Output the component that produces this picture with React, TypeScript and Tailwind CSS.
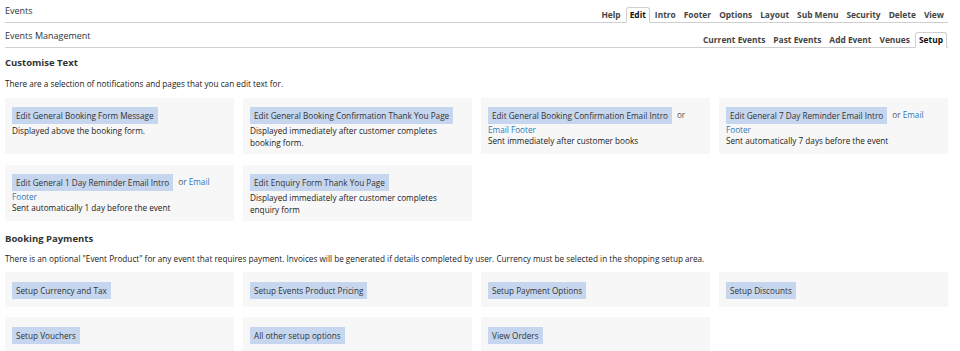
import React from "react";

const topTabs = ["Help", "Edit", "Intro", "Footer", "Options", "Layout", "Sub Menu", "Security", "Delete", "View"];
const subTabs = ["Current Events", "Past Events", "Add Event", "Venues", "Setup"];

type TextCard = {
  label: string;
  desc: string;
  footer?: boolean;
};

const textCards: TextCard[] = [
  { label: "Edit General Booking Form Message", desc: "Displayed above the booking form." },
  { label: "Edit General Booking Confirmation Thank You Page", desc: "Displayed immediately after customer completes booking form." },
  { label: "Edit General Booking Confirmation Email Intro", desc: "Sent immediately after customer books", footer: true },
  { label: "Edit General 7 Day Reminder Email Intro", desc: "Sent automatically 7 days before the event", footer: true },
  { label: "Edit General 1 Day Reminder Email Intro", desc: "Sent automatically 1 day before the event", footer: true },
  { label: "Edit Enquiry Form Thank You Page", desc: "Displayed immediately after customer completes enquiry form" },
];

const paymentCards = [
  "Setup Currency and Tax",
  "Setup Events Product Pricing",
  "Setup Payment Options",
  "Setup Discounts",
  "Setup Vouchers",
  "All other setup options",
  "View Orders",
];

function TabBar({ title, tabs, active }: { title: string; tabs: string[]; active: string }) {
  return (
    <div className="flex justify-between items-end h-[23px] border-b border-[#cfcfcf]">
      <div className="self-start pt-[4px] text-[9px] leading-[14px] text-[#333]">{title}</div>
      <div className="flex items-end -mb-px">
        {tabs.map((t) =>
          t === active ? (
            <div
              key={t}
              className="h-[16px] px-[3px] mx-[1px] flex items-center bg-white border border-b-white border-[#cfcfcf] rounded-t-[3px] font-bold text-[8.4px] text-[#111]"
            >
              {t}
            </div>
          ) : (
            <div key={t} className="h-[16px] px-[4px] flex items-center font-bold text-[8.4px] text-[#444]">
              {t}
            </div>
          )
        )}
      </div>
    </div>
  );
}

function Btn({ children }: { children: React.ReactNode }) {
  return (
    <span className="inline-block bg-[#c6d6ee] text-[#333] px-[4px] py-[2px] leading-[13px] align-middle">{children}</span>
  );
}

export default function App() {
  return (
    <div
      className="w-[960px] h-[351px] overflow-hidden bg-white pl-[5px] pr-[12px] text-[8.2px] text-[#222]"
      style={{ fontFamily: '"Open Sans", "Noto Sans", sans-serif' }}
    >
      <TabBar title="Events" tabs={topTabs} active="Edit" />
      <div className="h-[2px]" />
      <TabBar title="Events Management" tabs={subTabs} active="Setup" />

      <h2 className="mt-[9px] font-bold text-[9.5px] leading-[12px] text-[#333]">Customise Text</h2>
      <p className="mt-[9px] leading-[12px]">There are a selection of notifications and pages that you can edit text for.</p>

      <div className="mt-[8px] grid grid-cols-4 gap-x-[9px] gap-y-[11px]">
        {textCards.map((c) => (
          <div key={c.label} className="bg-[#f7f7f7] px-[7px] pt-[9px] pb-[8px] h-[56px] leading-[12px]">
            <div className="leading-[11px]">
              <Btn>{c.label}</Btn>
              {c.footer && (
                <>
                  <span className="ml-[5px] text-[#555]">or</span> <span className="text-[#2f7ab8]">Email</span>{" "}
                  <span className="text-[#2f7ab8]">Footer</span>
                </>
              )}
            </div>
            <div className={c.footer ? "leading-[11px]" : "leading-[12px] mt-[1px]"}>{c.desc}</div>
          </div>
        ))}
      </div>

      <h2 className="mt-[12px] font-bold text-[9.5px] leading-[12px] text-[#333]">Booking Payments</h2>
      <p className="mt-[8px] leading-[12px]">
        There is an optional "Event Product" for any event that requires payment. Invoices will be generated if details completed by user. Currency must be selected in the shopping setup area.
      </p>

      <div className="mt-[7px] grid grid-cols-4 gap-x-[9px] gap-y-[10px]">
        {paymentCards.map((c) => (
          <div key={c} className="bg-[#f7f7f7] px-[7px] py-[9px] h-[35px] leading-[17px]">
            <Btn>{c}</Btn>
          </div>
        ))}
      </div>
    </div>
  );
}
